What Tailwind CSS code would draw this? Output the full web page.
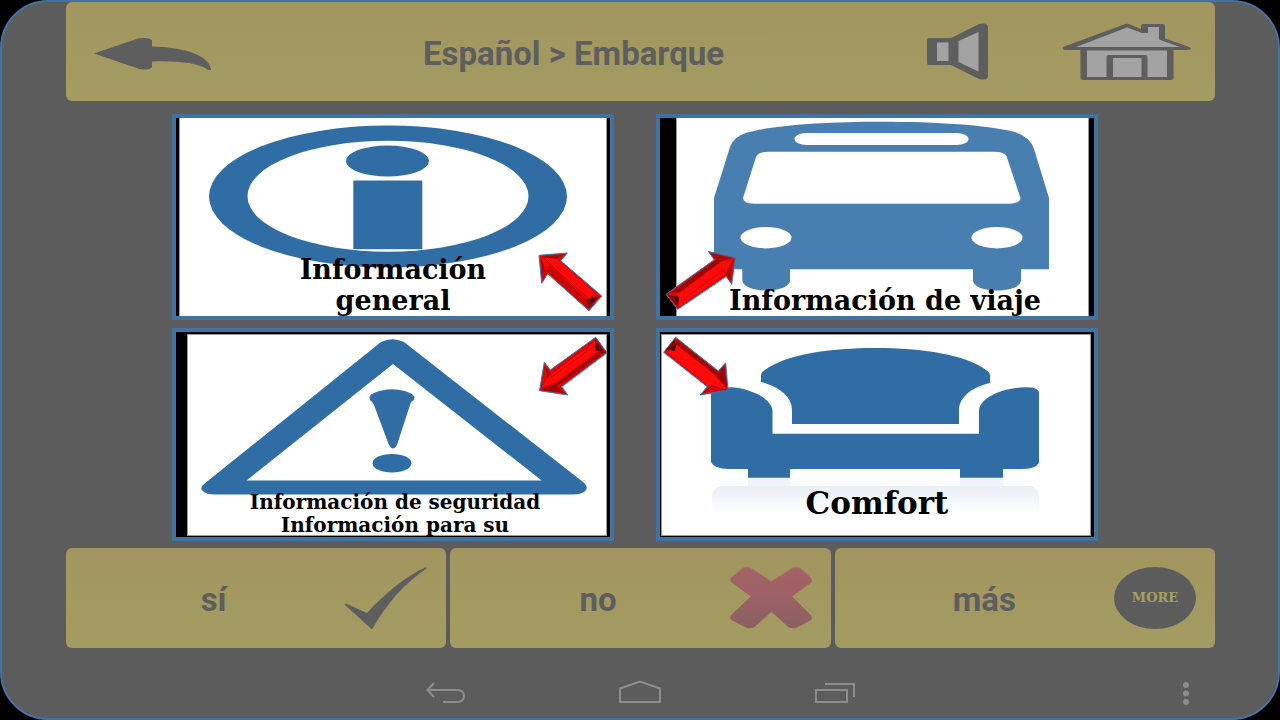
<!DOCTYPE html>
<html lang="es">
<head>
<meta charset="utf-8">
<meta name="viewport" content="width=device-width, initial-scale=1">
<title>Español &gt; Embarque</title>
<script src="https://cdn.jsdelivr.net/npm/@tailwindcss/browser@4"></script>
</head>
<body class="bg-black">
<div class="flex min-h-screen flex-col rounded-[48px] border-2 border-[#4173a4] bg-[#5c5c5c] pr-[63px] pl-16 font-['Roboto',sans-serif] text-[#5e5e5f]">

  <header class="flex min-h-[99px] items-center rounded-md bg-linear-to-b from-[#a2955f] to-[#a39c62] pr-6 pl-7">
    <button type="button" aria-label="Atrás" class="pt-1">
      <svg class="h-[34px] w-[118px]" viewBox="94 37 118 34" fill="#5e5e5e"><path d="M94 53.500L138 38.500C142 37.500 149 37.500 152 40L152 46.500C180 47 210 54 211 70L208 70C199 63 178 60.500 152 61.500L152 67.500C149 70 142 70 138 68.500Z"/></svg>
    </button>
    <h1 class="flex-1 pt-1 pl-2 text-center text-[33px] leading-10 font-bold">Español &gt; Embarque</h1>
    <button type="button" aria-label="Leer en voz alta">
      <svg class="h-[57px] w-[61px]" viewBox="927 23 61 57"><path d="M929 38H951L979 24Q988 22 988 27V76Q988 81 979 79L951 65H929Q927 65 927 63V40Q927 38 929 38Z" fill="#5e5e5e"/><path d="M937 42.500H948.500V61H937ZM958.500 41L978.500 32V71.500L958.500 62Z" fill="#a3a3a3"/></svg>
    </button>
    <button type="button" aria-label="Inicio" class="ml-[75px]">
      <svg class="h-[57px] w-[128px]" viewBox="1063 22 128 57"><path d="M1063 47Q1063 45.500 1067 44.500L1124 23.500Q1127 22 1130 23.500L1141 28V25Q1141 23 1143 23H1163Q1165 23 1165 25V37.500L1188 45.500Q1191 46.500 1191 48Q1190 49 1187 49H1173.500V77Q1173.500 79 1171 79H1083Q1080.500 79 1080.500 77V49H1066Q1063 49 1063 47Z" fill="#5e5e5e"/><path d="M1076 46L1127 26.500L1142 32H1148V26H1159V38.500L1180 46ZM1087 49.500H1167V76H1147.500V56Q1147.500 54 1145 54H1109Q1106.500 54 1106.500 56V76H1087ZM1113 57H1141.500V76H1113Z" fill="#a3a3a3"/></svg>
    </button>
  </header>

  <main class="mt-[13px] pr-[11px]">
    <div class="mx-auto grid max-w-[926px] grid-cols-2 gap-x-[42px] gap-y-2 font-['DejaVu_Serif',serif] font-bold text-black">

      <button type="button" class="grid h-[206px] grid-cols-1 grid-rows-1 border-4 border-[#42729f] bg-black">
        <svg class="col-start-1 row-start-1 h-[198px] w-full" viewBox="176 118 434 198" preserveAspectRatio="none" aria-hidden="true">
          <rect x="179" y="118" width="428" height="198" fill="#999"/><rect x="180" y="118" width="426" height="198" fill="#fff"/>
          <path fill="#2f6da4" fill-rule="evenodd" d="M209 196.500A179 71 0 0 1 567 196.500A179 71 0 0 1 209 196.500ZM247.500 196.200A140.500 55.500 0 0 0 528.500 196.200A140.500 55.500 0 0 0 247.500 196.200Z"/>
          <ellipse cx="387.500" cy="161" rx="41.500" ry="15.400" fill="#2f6da4"/><rect x="353.300" y="180.500" width="69" height="68.700" fill="#2f6da4"/>
        </svg>
        <span class="col-start-1 row-start-1 self-end text-[27px] leading-[31px]">Información<br>general</span>
        <svg class="col-start-1 row-start-1 h-[198px] w-full" viewBox="176 118 434 198" preserveAspectRatio="none" aria-hidden="true">
          <path d="M539 255.300L567.300 253L560.700 260.700L601.700 296L589 310.700L547.700 273.700L541.700 283.300Z" fill="#d90808" stroke="#2d79bd"/>
          <path d="M542 257L563 254.500L555 260L545 263L542 279Z" fill="#a80808"/><path d="M541 257L557 259L595 293L587 300L545 268Z" fill="#ff0a0a"/><path d="M546 267L550 266L588 300L588 308L548 272Z" fill="#c80505"/><path d="M548 263L589 299M543 257L550 264" stroke="#b00000" fill="none"/><path d="M587 300L599 296L589 309Z" fill="#850000"/><path d="M588 300L596 296L593 302Z" fill="#2c0000"/>
        </svg>
      </button>

      <button type="button" class="grid h-[206px] grid-cols-1 grid-rows-1 border-4 border-[#42729f] bg-black">
        <svg class="col-start-1 row-start-1 h-[198px] w-full" viewBox="660 118 434 198" preserveAspectRatio="none" aria-hidden="true">
          <rect x="676" y="118" width="413" height="198" fill="#999"/><rect x="677" y="118" width="411" height="198" fill="#fff"/>
          <path fill="#497eb0" d="M714 198L730 147Q733 137 747 132.500C775 125 825 121.700 881.700 121.700C938 121.700 985 125 1013 131.500Q1030 136 1034 149L1049 198V269.300H1021V280C1021 294 973 294 973 280V269.300H790V280C790 294 742.300 294 742.300 280V269.300H714Z"/>
          <rect x="794.500" y="133" width="174" height="12" rx="12" ry="6" fill="#fff"/>
          <path d="M756 157Q758 151.700 769 151.700H994Q1004 151.700 1006.500 156L1020.500 198Q1020 203.500 1009 203.700H754Q743 203.500 743 198Z" fill="#fff"/>
          <ellipse cx="766" cy="237.700" rx="25.500" ry="10.700" fill="#fff"/><ellipse cx="997" cy="237.700" rx="25.500" ry="10.700" fill="#fff"/>
        </svg>
        <span class="col-start-1 row-start-1 self-end pl-4 text-[27px] leading-[31px]">Información de viaje</span>
        <svg class="col-start-1 row-start-1 h-[198px] w-full" viewBox="660 118 434 198" preserveAspectRatio="none" aria-hidden="true">
          <path d="M735.300 257.700L708.300 251.500L714.300 259.700L666 294.300L677.700 309.300L726.300 276.300L731.700 284.300Z" fill="#d90808" stroke="#3a74b0"/>
          <path d="M711 253L733 259L730 280L725 270L714 258Z" fill="#a80808"/><path d="M734 258L720 262L678 294L679 307L725 274L729 266Z" fill="#ff0a0a"/><path d="M671 293L716 260L722 261L680 292Z" fill="#9c0505"/><path d="M679 302L724 270L729 280" stroke="#d00000" fill="none"/><path d="M668 295L679 297L678 307Z" fill="#850000"/><path d="M673 296L679 297L678 302Z" fill="#2c0000"/>
        </svg>
      </button>

      <button type="button" class="grid h-[213px] grid-cols-1 grid-rows-1 border-4 border-[#42729f] bg-black">
        <svg class="col-start-1 row-start-1 h-[205px] w-full" viewBox="176 332 434 205" preserveAspectRatio="none" aria-hidden="true">
          <rect x="187" y="334" width="420" height="202" fill="#999"/><rect x="188" y="335" width="418" height="200" fill="#fff"/>
          <path fill="#2f6da4" fill-rule="evenodd" d="M381 342Q392 336.500 404 342L583 482Q590 488 584 492Q580 494.500 573 494.500H215Q206 494.500 203 491Q199 488 204 484ZM393 364L246.500 480.500H541.700Z"/>
          <path fill="#2f6da4" d="M370 400Q368 395 374 393Q392 385.500 410 393Q416 396 414 400Q411 401 410 405L397 445Q393 452 389 445L374 405Q373 402 370 400Z"/><ellipse cx="392" cy="463.200" rx="19.500" ry="9.300" fill="#2f6da4"/>
        </svg>
        <span class="col-start-1 row-start-1 self-end pl-1 text-[20px] leading-[23px] whitespace-nowrap">Información de seguridad<br>Información para su</span>
        <svg class="col-start-1 row-start-1 h-[205px] w-full" viewBox="176 332 434 205" preserveAspectRatio="none" aria-hidden="true">
          <path d="M539.500 390.700L544.300 362.300L550.300 370L595.700 337.300L607 352.700L561.700 386.700L567.700 395Z" fill="#d90808" stroke="#2d79bd"/>
          <path d="M545 366L548 379L542 390L564 393L557 386L606 352L602 350L556 382Z" fill="#a00505"/><path d="M541 389L549 376L595 342L598 351L557 382Z" fill="#ff0a0a"/><path d="M550 378L596 345" stroke="#d00000" fill="none"/><path d="M595 339L595 350L605 352Z" fill="#850000"/><path d="M595 343L596 350L601 351Z" fill="#2c0000"/>
        </svg>
      </button>

      <button type="button" class="grid h-[213px] grid-cols-1 grid-rows-1 border-4 border-[#42729f] bg-black">
        <svg class="col-start-1 row-start-1 h-[205px] w-full" viewBox="660 332 434 205" preserveAspectRatio="none" aria-hidden="true">
          <defs><linearGradient id="shade" x1="0" y1="0" x2="0" y2="1"><stop offset="0" stop-color="#e9eff6"/><stop offset="1" stop-color="#fff"/></linearGradient></defs>
          <rect x="661" y="334" width="430" height="202" fill="#999"/><rect x="662" y="335" width="428" height="200" fill="#fff"/>
          <rect x="712" y="486" width="327" height="28" rx="10" fill="url(#shade)"/><path d="M748 478H790V486H748ZM960 478H1003V486H960Z" fill="#f0f4f9"/>
          <path fill="#2f6da4" d="M761 376Q761 372 765 370C787 354 830 348 875 348C923 348 967 355 986 370Q990 372 990 376V383C968 388 959 400 959 410V424H792V410C792 397 780 387 761 382Z"/>
          <path fill="#2f6da4" d="M711 391Q718 387.300 732 387.300C752 389 772 399 772.500 411V433.700H979V411C979 399 1000 387.300 1026 387.300Q1038 387.300 1039 392V463Q1035 469 1022 469H1003V477.700H960V469H790V477.700H748V469H729Q714 469 711 462Z"/>
        </svg>
        <span class="col-start-1 row-start-1 self-end pb-4 text-[31px] leading-9">Comfort</span>
        <svg class="col-start-1 row-start-1 h-[205px] w-full" viewBox="660 332 434 205" preserveAspectRatio="none" aria-hidden="true">
          <path d="M728 390L725.700 362.700L718.300 371L675.700 337.300L663.700 352.300L707.300 386.700L700.300 395Z" fill="#d90808" stroke="#2d79bd"/>
          <path d="M677 340L719 373L724 366L727 388L714 379L672 347Z" fill="#9c0505"/><path d="M727 389L715 375L677 345L667 352L708 386Z" fill="#ff0a0a"/><path d="M704 392L712 386L726 390" stroke="#8c0000" fill="none"/><path d="M675 339L665 351L676 347Z" fill="#850000"/><path d="M676 344L670 350L675 351Z" fill="#2c0000"/>
        </svg>
      </button>
    </div>
  </main>

  <div class="mt-[7px] grid grid-cols-3 gap-1 text-[33px] leading-10 font-bold">
    <button type="button" class="flex h-[100px] items-center rounded-md bg-linear-to-b from-[#a2955f] to-[#a39c62] pr-[19px] pl-4">
      <span class="flex-1 pt-1">sí</span>
      <svg class="h-[62px] w-[82px]" viewBox="344 567 82 62" aria-hidden="true"><path d="M344 605Q343 603 346 604L366 613C382 595 404 577 424 567.500Q427 567 425 569C403 584 386 603 371 629.500Z" fill="#5e5e5e"/></svg>
    </button>
    <button type="button" class="flex h-[100px] items-center rounded-md bg-linear-to-b from-[#a2955f] to-[#a39c62] pr-[19px] pl-4">
      <span class="flex-1 pt-1">no</span>
      <svg class="h-[62px] w-[82px]" viewBox="728 567 83 63" preserveAspectRatio="none" aria-hidden="true">
        <defs><linearGradient id="cross" x1="0" y1="0" x2="0" y2="1"><stop offset="0" stop-color="#a36367"/><stop offset=".4" stop-color="#9f6165"/><stop offset="1" stop-color="#8b6062"/></linearGradient></defs>
        <path d="M741 568Q745 566 749 568L770 581.500L791 568Q795 566 799 568L810 578Q812 581 810 583L791 597L810 616Q812 619 810 621L795 629Q791 630 787 628L770 612.500L753 628Q749 630 745 629L730 621Q727 619 729 616L749 597L730 583Q727 581 729 578Z" fill="url(#cross)"/>
        <path d="M729 578L741 568Q745 566 749 568L770 581.500L791 568Q795 566 799 568L810 578" fill="none" stroke="#ad7874"/>
      </svg>
    </button>
    <button type="button" class="flex h-[100px] items-center rounded-md bg-linear-to-b from-[#a2955f] to-[#a39c62] pr-[19px] pl-5">
      <span class="flex-1 pt-1">más</span>
      <span class="flex h-[62px] w-[82px] items-center justify-center rounded-[50%] bg-[#5c5c5c] font-['DejaVu_Serif',serif] text-[13px] leading-4 text-[#a3a362]">MORE</span>
    </button>
  </div>

  <nav class="mt-[31px] grid grid-cols-[1fr_auto_1fr] items-center pb-3">
    <span></span>
    <div class="flex items-center gap-[154px]">
      <button type="button" aria-label="Volver"><svg class="h-[26px] w-[39px]" viewBox="0 0 39 26" fill="none" stroke="#8d8d8d" stroke-width="2"><path d="M8 4L1.500 11L8 18M2 11H31Q38 11 38 17T31 23H17"/></svg></button>
      <button type="button" aria-label="Pantalla principal"><svg class="h-[26px] w-[42px]" viewBox="0 0 42 26" fill="none" stroke="#8d8d8d" stroke-width="2"><path d="M1 9.500L21 2.500L41 9.500V23H1Z"/></svg></button>
      <button type="button" aria-label="Recientes"><svg class="h-[26px] w-[40px]" viewBox="0 0 40 26" fill="none" stroke="#8d8d8d" stroke-width="2"><path d="M1 11H32V23H1ZM10 5H39V18"/></svg></button>
    </div>
    <button type="button" aria-label="Más opciones" class="justify-self-end pr-[25px]"><svg class="h-[26px] w-2" viewBox="0 0 8 26" fill="#8d8d8d"><circle cx="4" cy="6" r="3"/><circle cx="4" cy="14.500" r="3"/><circle cx="4" cy="23" r="3"/></svg></button>
  </nav>
</div>
</body>
</html>
